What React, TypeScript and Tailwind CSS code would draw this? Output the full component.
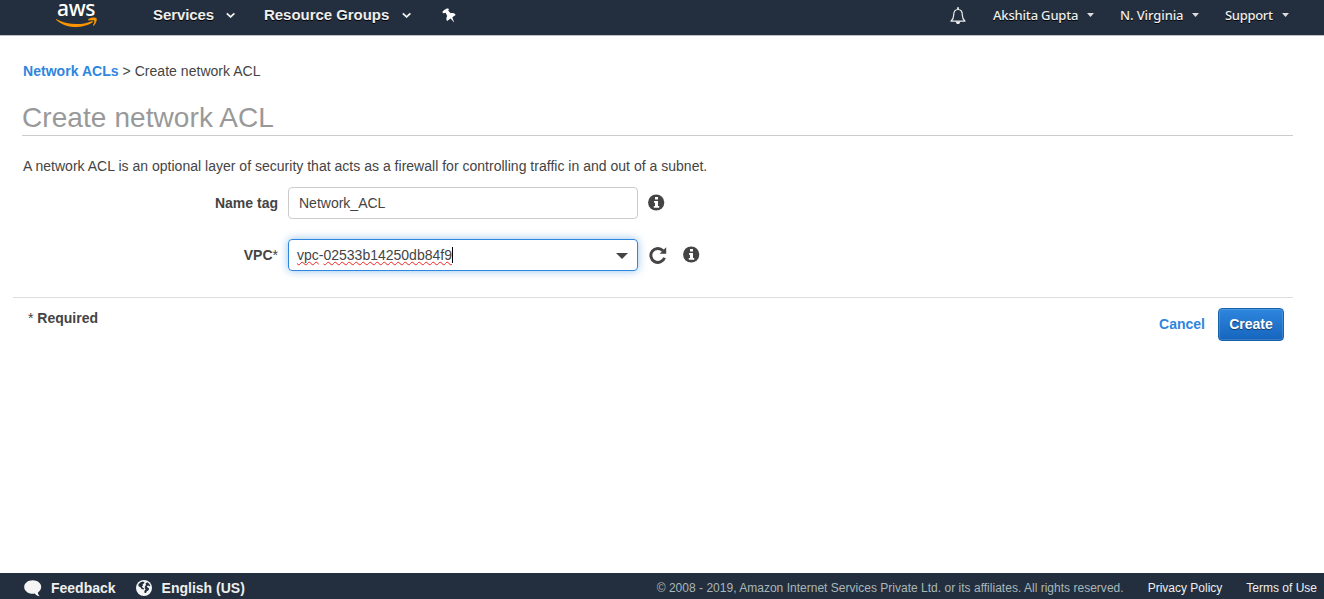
import type { ReactNode } from "react";

function Chevron() {
  return (
    <svg className="block h-[6px] w-[10px]" viewBox="0 0 10 6" fill="none">
      <path d="M.8 1.300 4.600 4.900 8.400 1.300" stroke="#eee" strokeWidth="1.800" />
    </svg>
  );
}

function Caret() {
  return (
    <svg className="block h-[4px] w-[7px]" viewBox="0 0 7 4">
      <path d="M0 0h7L3.500 4z" fill="#ddd" />
    </svg>
  );
}

function AwsLogo() {
  return (
    <div className="relative h-[35px] w-[42px]">
      <span className="absolute top-0 left-[1px] font-['Noto_Sans',sans-serif] text-[21px] leading-[17px] font-medium tracking-[-0.3px] text-white">
        aws
      </span>
      <svg className="absolute top-[17px] left-0 h-[11px] w-[42px]" viewBox="0 0 42 11">
        <path
          d="M.6 2.200C12 8 25 8.500 35.500 4.200c1-.4 1.800.6.9 1.300C26.500 12 10.500 11.800.3 2.900c-.5-.5-.2-1 .3-.7z"
          fill="#f79400"
        />
        <path
          d="M32.300 2.200c2-1.900 7.500-2 8.200-.9.800 1-.4 5.600-2.600 7.300-.6.500-1.200.1-.8-.5.700-1.500 1.700-3.700 1.100-4.400-.5-.6-3.500-.4-5.500-.3-.7 0-1-.7-.4-1.200z"
          fill="#f79400"
        />
      </svg>
    </div>
  );
}

function Pin() {
  return (
    <svg className="block h-[15px] w-[14px]" viewBox="0 0 14 15">
      <path
        d="M.5 4.600C0 3.200 4.400.1 6 .6c1 .3 1 1.500.3 2.100l2.400 2.500c2-.4 4.300.3 4.900 1.700l-3.300 2.300 1.900 5.200-3.600-4-3.500 2.500c-1-1.300-.9-3.400.1-5L3.600 4.800c-1 .6-2.700.8-3.100-.2z"
        fill="#fff"
      />
    </svg>
  );
}

function Bell() {
  return (
    <svg className="block h-[18px] w-[16px]" viewBox="0 0 16 18" fill="none">
      <path
        d="M1 14.200c1.800-1.600 2.700-3 2.700-6.200C3.700 4.600 5 2.500 8 2.500s4.300 2.100 4.300 5.500c0 3.200.9 4.600 2.700 6.200z"
        stroke="#eee"
        strokeWidth="1.200"
        strokeLinejoin="round"
      />
      <path d="M8 .3v2" stroke="#eee" strokeWidth="1.800" />
      <path d="M5.800 14.500h4.400c0 3.400-4.400 3.400-4.400 0z" fill="#eee" />
    </svg>
  );
}

function Info({ className }: { className: string }) {
  return (
    <svg className={`block size-[17px] ${className}`} viewBox="0 0 17 17">
      <circle cx="8.200" cy="8.500" r="8.100" fill="#444" />
      <path d="M7 3h3v2.500H7zM6 7h4v5h1.200v1.800H5.800V12H7V8.700H6z" fill="#fff" />
    </svg>
  );
}

function Refresh() {
  return (
    <svg className="block h-[18px] w-[18px]" viewBox="0 0 18 18" fill="none">
      <path d="M14 4.700A7 7 0 1 0 15.500 11.700" stroke="#444" strokeWidth="2.900" />
      <path d="M17.200 1.300v6.500h-6.500z" fill="#444" />
    </svg>
  );
}

function Comment() {
  return (
    <svg className="block h-[17px] w-[18px]" viewBox="0 0 18 17">
      <path
        d="M8.700.3C13.500.3 17.200 3.200 17.200 7c0 2.200-1.300 4.200-3.300 5.400.1 1.700.8 3 2.100 3.900-2.200-.1-4.200-1.100-5.300-2.700-.6.100-1.300.200-2 .2C4 13.800.2 10.800.2 7S4 .3 8.700.3z"
        fill="#f5f5f5"
      />
    </svg>
  );
}

function Globe() {
  return (
    <svg className="block size-[16px]" viewBox="0 0 16 16">
      <circle cx="8" cy="8" r="8" fill="#f5f5f5" />
      <path
        d="M4.500 2.300 7 1.600l1.600.8-.8 1.200-1.200.6.400 1.200-1 .9.500 1.300 1.600.8-.5 1-2-.5L4.200 7l-1.500-.6-.4-1.900zM9.500 3.400l1.800-1.200 1.900 1.500 1.200 2.200-.9.300-1.300-.8-1.500.9.9 1.200 1.400.7-.2 1.700-1.900 1.300-.9 1.900-1.400-.2-.3-2 1.300-1.600-.9-1.300.4-1.900 1-1.200z"
        fill="#232f3e"
      />
    </svg>
  );
}

function UserMenu({ children, className }: { children: ReactNode; className: string }) {
  return (
    <div className={`flex items-center justify-between ${className}`}>
      <span>{children}</span>
      <Caret />
    </div>
  );
}

const squiggle =
  "underline decoration-[#f02020] decoration-wavy decoration-[1px] underline-offset-[1px] [text-decoration-skip-ink:none]";

export default function App() {
  return (
    <div className="flex h-[599px] w-[1324px] flex-col overflow-hidden bg-white font-['Liberation_Sans',Arial,sans-serif] text-[14px] leading-[20px] whitespace-nowrap text-[#444]">
      <header className="flex h-[36px] shrink-0 items-start border-b border-[#bfc1c4] bg-[#232f3e] pl-[56px] text-[#eee]">
        <AwsLogo />
        <nav className="ml-[55px] flex h-[30px] items-center text-[15px] font-bold [text-shadow:0_1px_0_#000]">
          <div className="flex w-[83px] items-center justify-between">
            <span className="tracking-[-0.1px]">Services</span>
            <Chevron />
          </div>
          <div className="ml-[28px] flex w-[148px] items-center justify-between">
            <span className="tracking-[-0.04px]">Resource Groups</span>
            <Chevron />
          </div>
          <div className="ml-[30px]">
            <Pin />
          </div>
        </nav>
        <div className="ml-auto flex h-[32px] items-center pr-[35px] font-['Noto_Sans',sans-serif] text-[13px] [text-shadow:0_1px_0_#000]">
          <Bell />
          <div className="-mt-[2px] ml-[27px] flex gap-[26px] font-medium">
            <UserMenu className="w-[101px] tracking-[-0.18px]">Akshita Gupta</UserMenu>
            <UserMenu className="w-[79px] tracking-[-0.1px]">N. Virginia</UserMenu>
            <UserMenu className="w-[64px] tracking-[-0.3px]">Support</UserMenu>
          </div>
        </div>
      </header>

      <main className="flex-1 pr-[31px] pl-[13px]">
        <div className="pt-[25px] pl-[10px] tracking-[0.035px]">
          <a className="font-bold text-[#2e86de]">Network ACLs</a> &gt; Create network ACL
        </div>
        <h1 className="mt-[17px] ml-[9px] h-[38px] border-b border-[#ccc] text-[28px] leading-[40px] tracking-[0.08px] text-[#999]">
          Create network ACL
        </h1>
        <p className="mt-[20px] pl-[10px] tracking-[0.015px]">
          A network ACL is an optional layer of security that acts as a firewall for controlling traffic in and out of a subnet.
        </p>
        <form>
          <div className="mt-[11px] flex h-[32px] items-center">
            <label className="w-[265px] text-right font-bold">Name tag</label>
            <div className="ml-[10px] flex h-[32px] w-[350px] items-center rounded-[4px] border border-[#ccc] px-[10px]">
              Network_ACL
            </div>
            <Info className="-mt-px ml-[10px]" />
          </div>
          <div className="mt-[20px] flex h-[32px] items-center">
            <label className="w-[265px] text-right font-bold">
              VPC<span className="font-normal">*</span>
            </label>
            <div className="ml-[10px] flex h-[32px] w-[350px] items-center justify-between rounded-[4px] border border-[#2e86de] pr-[9px] pl-[8px] shadow-[0_0_8px_rgba(46,134,222,0.5)]">
              <span className="flex items-center">
                <span>
                  <span className={squiggle}>vpc</span>-<span className={squiggle}>02533b14250db84f9</span>
                </span>
                <span className="h-[16px] w-px bg-black" />
              </span>
              <svg className="mt-[2px] h-[6px] w-[12px]" viewBox="0 0 12 6">
                <path d="M0 0h12L6 6z" fill="#444" />
              </svg>
            </div>
            <div className="ml-[11px]">
              <Refresh />
            </div>
            <Info className="-mt-px ml-[16px]" />
          </div>
        </form>
        <div className="mt-[26px] flex justify-between border-t border-[#ddd] pt-[10px] pr-[9px] pl-[15px]">
          <span className="font-bold">
            <span className="font-normal">*</span> Required
          </span>
          <div className="flex items-start gap-[13px] font-bold">
            <a className="mt-[6px] text-[#2e86de]">Cancel</a>
            <button className="h-[33px] w-[66px] rounded-[4px] border border-[#1862ac] bg-linear-to-b from-[#2e86de] to-[#1565bd] pb-[2px] text-white shadow-[inset_0_0_0_1px_rgba(255,255,255,0.15)] [text-shadow:0_1px_1px_rgba(0,0,0,0.5)]">
              Create
            </button>
          </div>
        </div>
      </main>

      <footer className="flex h-[26px] shrink-0 items-center bg-[#232f3e] pt-[4px] pr-[7px] pl-[24px] text-[#eee]">
        <Comment />
        <span className="ml-[9px] font-bold">Feedback</span>
        <div className="ml-[20px]">
          <Globe />
        </div>
        <span className="ml-[10px] font-bold">English (US)</span>
        <div className="ml-auto flex text-[12px]">
          <span className="tracking-[0.015px] text-[#aab7b8]">
            © 2008 - 2019, Amazon Internet Services Private Ltd. or its affiliates. All rights reserved.
          </span>
          <span className="ml-[24px]">Privacy Policy</span>
          <span className="ml-[24px]">Terms of Use</span>
        </div>
      </footer>
    </div>
  );
}
